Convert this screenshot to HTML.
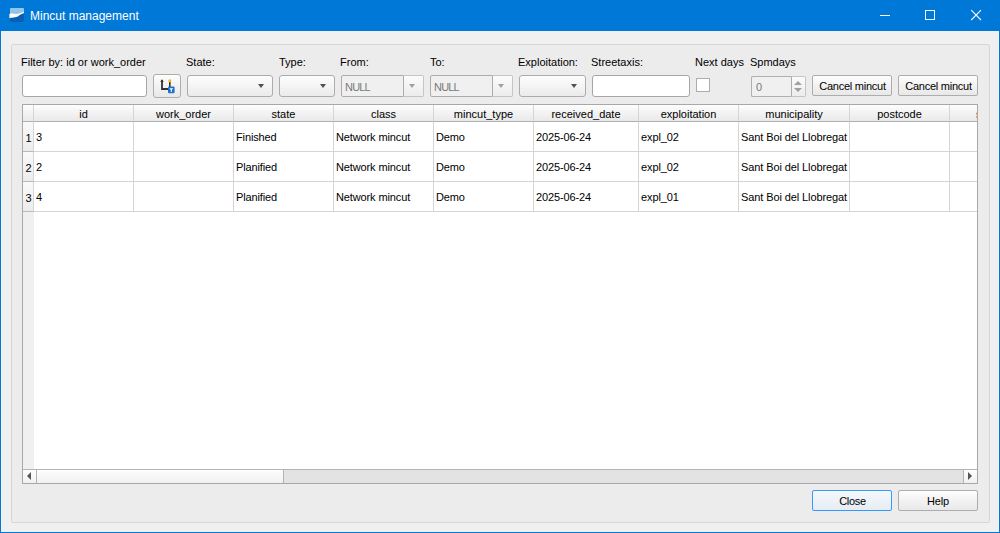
<!DOCTYPE html>
<html><head><meta charset="utf-8">
<style>
*{box-sizing:border-box;margin:0;padding:0}
html,body{width:1000px;height:533px;overflow:hidden;background:#f0f0f0;font-family:"Liberation Sans",sans-serif;font-size:11px;color:#000}
.a{position:absolute}
#win{position:absolute;left:0;top:0;width:1000px;height:533px;border:1px solid #0078d7;border-top:none;background:#f0f0f0}
#title{position:absolute;left:0;top:0;width:1000px;height:31px;background:#0078d7}
#ttext{position:absolute;left:30px;top:9px;font-size:12px;color:#fff;line-height:15px}
#grp{position:absolute;left:11px;top:44px;width:979px;height:479px;border:1px solid #d6d6d6;border-radius:2px;background:#ececec}
.lbl{position:absolute;top:56px;line-height:13px;white-space:nowrap}
.inp{position:absolute;top:75px;height:22px;background:#fff;border:1px solid #a6a6a6;border-radius:3px}
.cmb{position:absolute;top:75px;height:22px;border:1px solid #acacac;border-radius:3px;background:linear-gradient(#fdfdfd,#ebebeb)}
.arr{position:absolute;top:8px;width:0;height:0;border-left:3.8px solid transparent;border-right:3.8px solid transparent;border-top:4.3px solid #505050}
.dcmb{position:absolute;top:75px;width:83px;height:22px}
.de{position:absolute;left:0;top:0;width:63px;height:22px;border:1px solid #acacac;border-radius:2px 0 0 2px;background:#f0f0f0;color:#7a7a7a;padding-left:3px;line-height:22px;letter-spacing:-0.8px}
.db{position:absolute;left:63px;top:0;width:20px;height:22px;border:1px solid #c5c5c5;border-left:none;border-radius:0 2px 2px 0;background:linear-gradient(#fbfbfb,#ececec)}
.btn{position:absolute;height:21px;border:1px solid #adadad;border-radius:2px;background:linear-gradient(#fdfdfd,#e8e8e8);text-align:center;line-height:20px;padding-left:1px;white-space:nowrap}
#tbl{position:absolute;left:22px;top:104px;width:956px;height:380px;border:1px solid #a8a8a8;background:#fff;overflow:hidden}
.hd{position:absolute;top:0;height:17px;border-right:1px solid #d5d5d5;border-bottom:1px solid #b0b0b0;background:linear-gradient(#fdfdfd,#e9e9e9);text-align:center;line-height:18px;white-space:nowrap;overflow:hidden}
.vh{position:absolute;left:0;width:11px;border-right:1px solid #d5d5d5;border-bottom:1px solid #b9b9b9;background:linear-gradient(#fafafa,#ececec);text-align:center;line-height:30px;padding-top:1px;padding-left:1px}
.cell{position:absolute;height:30px;border-right:1px solid #d5d5d5;border-bottom:1px solid #d5d5d5;padding-left:2px;letter-spacing:-0.12px;line-height:30px;white-space:nowrap;overflow:hidden}
</style></head><body>
<div id="win"></div>
<div id="title">
  <svg class="a" style="left:9px;top:8px" width="16" height="14" viewBox="-1 0 16 14">
    <rect x="0" y="0" width="14" height="14" rx="0.8" fill="#93c5e6"/>
    <path d="M-0.6 5.9C2 5.2 4 5.9 6.5 6C9 6 11 4.6 14 3.7V5.6C11.5 5.8 10 7 8 8.4C6 9.3 3 9.4 -0.6 10.2Z" fill="#fff"/>
    <path d="M0 10C3 9.4 6 9.3 8 8.4C10 7 11.5 5.8 14 5.3V13.2Q14 14 13.2 14H0.8Q0 14 0 13.2Z" fill="#0b5fb3"/>
  </svg>
  <div id="ttext">Mincut management</div>
  <div class="a" style="left:880px;top:15px;width:10px;height:1px;background:#fff"></div>
  <div class="a" style="left:925px;top:10px;width:10px;height:10px;border:1px solid #fff"></div>
  <svg class="a" style="left:970px;top:9px" width="12" height="12" viewBox="0 0 12 12"><path d="M1.2 1.2L11 11M11 1.2L1.2 11" stroke="#fff" stroke-width="1.1"/></svg>
</div>
<div id="grp"></div>

<div class="lbl" style="left:21px">Filter by: id or work_order</div>
<div class="lbl" style="left:186px">State:</div>
<div class="lbl" style="left:279px">Type:</div>
<div class="lbl" style="left:340px">From:</div>
<div class="lbl" style="left:430px">To:</div>
<div class="lbl" style="left:518px">Exploitation:</div>
<div class="lbl" style="left:591px">Streetaxis:</div>
<div class="lbl" style="left:695px">Next days</div>
<div class="lbl" style="left:750px">Spmdays</div>

<div class="inp" style="left:22px;width:125px"></div>
<div class="btn" style="left:153px;top:74px;width:28px;height:24px;border-radius:3px"></div>
<svg class="a" style="left:153px;top:74px" width="28" height="24" viewBox="0 0 28 24">
  <path d="M9 7V15H15.5" fill="none" stroke="#333" stroke-width="1.8" stroke-linecap="square"/>
  <path d="M7.2 7.8L9 5.2L10.8 7.8Z" fill="#333"/>
  <path d="M16.8 8V13" stroke="#333" stroke-width="1.6"/>
  <circle cx="16.8" cy="6.8" r="1.5" fill="#f5c400"/>
  <rect x="15" y="12.6" width="6.6" height="6.6" rx="1.2" fill="#1a73c8"/>
  <path d="M16.4 14.3H20.2L18.8 16V18H17.8V16Z" fill="#fff"/>
</svg>
<div class="cmb" style="left:187px;width:86px"><div class="arr" style="left:70px"></div></div>
<div class="cmb" style="left:279px;width:56px"><div class="arr" style="left:40px"></div></div>
<div class="dcmb" style="left:341px"><div class="de">NULL</div><div class="db"><div class="arr" style="left:5px;border-top-color:#a0a0a0"></div></div></div>
<div class="dcmb" style="left:430px"><div class="de">NULL</div><div class="db"><div class="arr" style="left:5px;border-top-color:#a0a0a0"></div></div></div>
<div class="cmb" style="left:519px;width:67px"><div class="arr" style="left:51px"></div></div>
<div class="inp" style="left:592px;width:98px"></div>
<div class="a" style="left:696px;top:78px;width:14px;height:14px;border:1px solid #adadad;background:#fff"></div>
<div class="a" style="left:751px;top:76px;width:55px;height:21px">
  <div class="a" style="left:0;top:0;width:41px;height:21px;border:1px solid #b0b0b0;border-right-color:#acacac;border-radius:2px 0 0 2px;background:#f0f0f0;color:#7a7a7a;padding-left:4px;line-height:20px">0</div>
  <div class="a" style="left:41px;top:0;width:14px;height:21px;border:1px solid #c5c5c5;border-left:none;border-radius:0 2px 2px 0;background:linear-gradient(#fbfbfb,#ececec)">
    <div class="a" style="left:2px;top:4px;width:0;height:0;border-left:4px solid transparent;border-right:4px solid transparent;border-bottom:4px solid #a0a0a0"></div>
    <div class="a" style="left:2px;top:11px;width:0;height:0;border-left:4px solid transparent;border-right:4px solid transparent;border-top:4px solid #a0a0a0"></div>
  </div>
</div>
<div class="btn" style="left:812px;top:75px;width:80px;letter-spacing:-0.25px">Cancel mincut</div>
<div class="btn" style="left:898px;top:75px;width:80px;letter-spacing:-0.25px">Cancel mincut</div>

<div id="tbl">
  <div class="hd" style="left:0;width:11px;border-right:1px solid #d5d5d5"></div>
  <div class="hd" style="left:11px;width:100px">id</div>
  <div class="hd" style="left:111px;width:100px">work_order</div>
  <div class="hd" style="left:211px;width:100px">state</div>
  <div class="hd" style="left:311px;width:100px">class</div>
  <div class="hd" style="left:411px;width:100px">mincut_type</div>
  <div class="hd" style="left:511px;width:105px">received_date</div>
  <div class="hd" style="left:616px;width:100px">exploitation</div>
  <div class="hd" style="left:716px;width:111px">municipality</div>
  <div class="hd" style="left:827px;width:100px">postcode</div>
  <div class="hd" style="left:927px;width:100px">streetaxis</div>
  <div class="vh" style="top:17px;height:30px">1</div>
  <div class="cell" style="left:11px;top:17px;width:100px">3</div>
  <div class="cell" style="left:111px;top:17px;width:100px"></div>
  <div class="cell" style="left:211px;top:17px;width:100px">Finished</div>
  <div class="cell" style="left:311px;top:17px;width:100px">Network mincut</div>
  <div class="cell" style="left:411px;top:17px;width:100px">Demo</div>
  <div class="cell" style="left:511px;top:17px;width:105px">2025-06-24</div>
  <div class="cell" style="left:616px;top:17px;width:100px">expl_02</div>
  <div class="cell" style="left:716px;top:17px;width:111px" ><span style="letter-spacing:-0.1px">Sant Boi del Llobregat</span></div>
  <div class="cell" style="left:827px;top:17px;width:100px"></div>
  <div class="cell" style="left:927px;top:17px;width:100px"></div>
  <div class="vh" style="top:47px;height:30px">2</div>
  <div class="cell" style="left:11px;top:47px;width:100px">2</div>
  <div class="cell" style="left:111px;top:47px;width:100px"></div>
  <div class="cell" style="left:211px;top:47px;width:100px">Planified</div>
  <div class="cell" style="left:311px;top:47px;width:100px">Network mincut</div>
  <div class="cell" style="left:411px;top:47px;width:100px">Demo</div>
  <div class="cell" style="left:511px;top:47px;width:105px">2025-06-24</div>
  <div class="cell" style="left:616px;top:47px;width:100px">expl_02</div>
  <div class="cell" style="left:716px;top:47px;width:111px" ><span style="letter-spacing:-0.1px">Sant Boi del Llobregat</span></div>
  <div class="cell" style="left:827px;top:47px;width:100px"></div>
  <div class="cell" style="left:927px;top:47px;width:100px"></div>
  <div class="vh" style="top:77px;height:30px">3</div>
  <div class="cell" style="left:11px;top:77px;width:100px">4</div>
  <div class="cell" style="left:111px;top:77px;width:100px"></div>
  <div class="cell" style="left:211px;top:77px;width:100px">Planified</div>
  <div class="cell" style="left:311px;top:77px;width:100px">Network mincut</div>
  <div class="cell" style="left:411px;top:77px;width:100px">Demo</div>
  <div class="cell" style="left:511px;top:77px;width:105px">2025-06-24</div>
  <div class="cell" style="left:616px;top:77px;width:100px">expl_01</div>
  <div class="cell" style="left:716px;top:77px;width:111px" ><span style="letter-spacing:-0.1px">Sant Boi del Llobregat</span></div>
  <div class="cell" style="left:827px;top:77px;width:100px"></div>
  <div class="cell" style="left:927px;top:77px;width:100px"></div>
  <div class="a" style="left:0;top:107px;width:11px;height:257px;background:#f0f0f0"></div>
  <div class="a" style="left:0;top:364px;width:954px;height:15px;border-top:1px solid #b4b4b4;background:#e3e3e3"></div>
  <div class="a" style="left:0;top:365px;width:14px;height:14px;border-right:1px solid #b4b4b4;background:linear-gradient(#fdfdfd,#f0f0f0)"></div>
  <div class="a" style="left:4px;top:367px;width:0;height:0;border-top:4px solid transparent;border-bottom:4px solid transparent;border-right:4px solid #555"></div>
  <div class="a" style="left:14px;top:365px;width:247px;height:14px;border-right:1px solid #b4b4b4;background:linear-gradient(#fdfdfd,#f0f0f0)"></div>
  <div class="a" style="left:940px;top:365px;width:14px;height:14px;border-left:1px solid #b4b4b4;background:linear-gradient(#fdfdfd,#f0f0f0)"></div>
  <div class="a" style="left:945px;top:367px;width:0;height:0;border-top:4px solid transparent;border-bottom:4px solid transparent;border-left:4px solid #555"></div>
</div>

<div class="btn" style="left:812px;top:490px;width:80px;border-color:#3399ff;background:linear-gradient(#f5f9fd,#e5ecf3);letter-spacing:-0.3px">Close</div>
<div class="btn" style="left:898px;top:490px;width:80px;letter-spacing:-0.2px;padding-left:0">Help</div>
</body></html>
